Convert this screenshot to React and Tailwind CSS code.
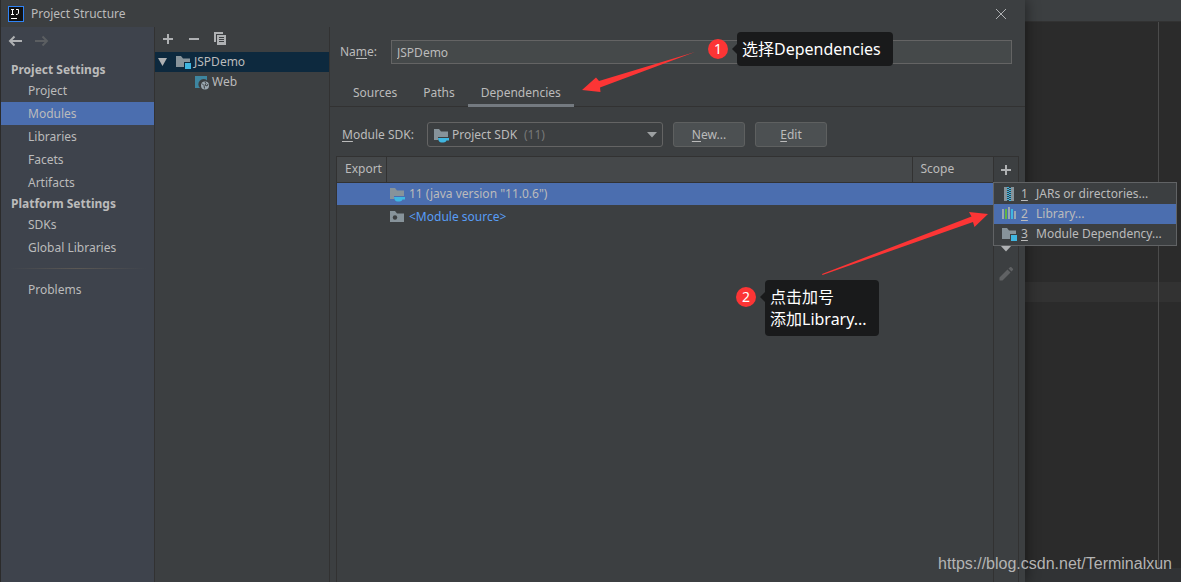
import React, { useState } from 'react';

const PROJECT_ITEMS = ['Project', 'Modules', 'Libraries', 'Facets', 'Artifacts'];
const PLATFORM_ITEMS = ['SDKs', 'Global Libraries'];
const TABS = ['Sources', 'Paths', 'Dependencies'];

function FolderShape() {
  return <path d="M1 2h5l2 2.5h7V13H1z" fill="#87939a" />;
}

function ModuleIcon() {
  return (
    <svg width="16" height="16" viewBox="0 0 16 16" className="shrink-0">
      <path d="M1 2h5l2 2.5h7V8H9v5H1z" fill="#87939a" />
      <path d="M10 9h6v6h-6z" fill="#40b6e0" />
    </svg>
  );
}

function SdkIcon() {
  return (
    <svg width="16" height="16" viewBox="0 0 16 16" className="shrink-0">
      <path d="M1 2h5l2 2.5h7V10H5v3H1z" fill="#87939a" />
      <path d="M5 11h11v2.500h-2.500c-.5 1-1.500 2-3 2h-2C6.500 15.500 5 13.500 5 11z" fill="#40b6e0" />
    </svg>
  );
}

function SourceIcon() {
  return (
    <svg width="16" height="16" viewBox="0 0 16 16" className="shrink-0">
      <FolderShape />
      <circle cx="6" cy="8.500" r="2.200" fill="#3c3f41" />
    </svg>
  );
}

function WebIcon() {
  return (
    <svg width="16" height="16" viewBox="0 0 16 16" className="shrink-0">
      <path d="M1 2h12v4.500A5 5 0 0 0 6 14H1z" fill="#3e86a0" />
      <circle cx="11" cy="11.500" r="4" fill="#9aa7b0" />
      <path d="M8 9.500l2 2 .5 3M11 8l1 1.500-1 1.500 2 1 1-2" fill="none" stroke="#3c3f41" />
    </svg>
  );
}

function JarIcon() {
  return (
    <svg width="16" height="16" viewBox="0 0 16 16" className="shrink-0">
      <path d="M3 1h10v14H3z" fill="#87939a" />
      <path d="M6 1h4v14H6z" fill="#33434c" />
      <path d="M7 1v14" stroke="#40b6e0" strokeWidth="2" strokeDasharray="1 1" />
      <path d="M9 2v13" stroke="#40b6e0" strokeWidth="2" strokeDasharray="1 1" />
    </svg>
  );
}

function LibraryIcon() {
  return (
    <svg width="16" height="16" viewBox="0 0 16 16" className="shrink-0">
      <path d="M1 3h2v10H1zM7 1h2v12H7zM13 5h2v8h-2z" fill="#9aa7b0" />
      <path d="M4 3h2v10H4z" fill="#62b543" />
      <path d="M10 3h2v10h-2z" fill="#40b6e0" />
    </svg>
  );
}

function PlusIcon() {
  return (
    <svg width="16" height="16" viewBox="0 0 16 16">
      <path d="M8 3v10M3 8h10" stroke="#afb1b3" strokeWidth="2" />
    </svg>
  );
}

function MinusIcon() {
  return (
    <svg width="16" height="16" viewBox="0 0 16 16">
      <path d="M3 8h10" stroke="#afb1b3" strokeWidth="2" />
    </svg>
  );
}

function CopyIcon() {
  return (
    <svg width="16" height="16" viewBox="0 0 16 16">
      <path d="M3 11V2h8" fill="none" stroke="#afb1b3" strokeWidth="2" />
      <path d="M5 4h9v10H5z" fill="#afb1b3" />
      <path d="M7 6.500h5M7 8.500h5M7 10.500h5" stroke="#3c3f41" />
    </svg>
  );
}

function ArrowIcon({ color, flip }) {
  return (
    <svg width="16" height="16" viewBox="0 0 16 16" className={flip ? 'rotate-180' : ''}>
      <path d="M15 8H3M7.500 3.500L3 8l4.500 4.500" fill="none" stroke={color} strokeWidth="2" />
    </svg>
  );
}

function Titlebar() {
  return (
    <header className="flex h-[27px] items-center pr-4 pl-[7px]">
      <svg width="16" height="16" viewBox="0 0 16 16">
        <rect x="0.500" y="0.500" width="15" height="15" fill="#111" stroke="#2f83f5" />
        <path d="M3 12.500h6" stroke="#fff" />
        <path d="M3 3.500h3M4.500 3v5M3 8.500h3M8 3.500h2.500V7c0 1-1 1.500-2.500 1.500" fill="none" stroke="#fff" />
      </svg>
      <h1 className="ml-[7px] flex-1">Project Structure</h1>
      <button aria-label="Close" className="flex h-4 w-4 items-center justify-center">
        <svg width="10" height="10" viewBox="0 0 10 10">
          <path d="M0 0l10 10M10 0L0 10" stroke="#afb1b3" />
        </svg>
      </button>
    </header>
  );
}

function SidebarItem({ label, active, onSelect }) {
  return (
    <button
      onClick={() => onSelect(label)}
      className={`block h-[23px] w-full pl-[27px] text-left ${active ? 'bg-[#4b6eaf]' : ''}`}
    >
      {label}
    </button>
  );
}

function Sidebar() {
  const [selected, setSelected] = useState('Modules');

  return (
    <nav className="w-[154px] shrink-0 border-r border-[#323232] bg-[#3e434c]">
      <div className="flex h-[33px] items-center gap-[11px] pb-[5px] pl-1.5">
        <button aria-label="Back"><ArrowIcon color="#afb1b3" /></button>
        <button aria-label="Forward"><ArrowIcon color="#5b5e61" flip /></button>
      </div>
      <h2 className="h-[19px] pl-2.5 leading-[19px] font-bold">Project Settings</h2>
      {PROJECT_ITEMS.map((item) => (
        <SidebarItem key={item} label={item} active={item === selected} onSelect={setSelected} />
      ))}
      <h2 className="h-[19px] pl-2.5 leading-[19px] font-bold">Platform Settings</h2>
      {PLATFORM_ITEMS.map((item) => (
        <SidebarItem key={item} label={item} active={item === selected} onSelect={setSelected} />
      ))}
      <div className="mx-2 mt-[9px] mb-[9px] h-px bg-linear-to-r from-transparent via-[#5b5854] to-transparent" />
      <SidebarItem label="Problems" active={selected === 'Problems'} onSelect={setSelected} />
    </nav>
  );
}

function ModuleTree() {
  return (
    <aside className="w-[175px] shrink-0 border-r border-[#323232]">
      <div className="flex h-[25px] items-center gap-2.5 pb-0.5 pl-[5px]">
        <button aria-label="Add"><PlusIcon /></button>
        <button aria-label="Remove"><MinusIcon /></button>
        <button aria-label="Copy"><CopyIcon /></button>
      </div>
      <button className="flex h-5 w-full items-center bg-[#0d293e] pl-[3px]">
        <svg width="10" height="8" viewBox="0 0 10 8">
          <path d="M0 0h9L4.500 8z" fill="#afb1b3" />
        </svg>
        <span className="ml-[7px] flex items-center gap-[3px]"><ModuleIcon />JSPDemo</span>
      </button>
      <button className="flex h-5 w-full items-center gap-0.5 pl-[39px]">
        <WebIcon />Web
      </button>
    </aside>
  );
}

function SdkRow() {
  return (
    <div className="flex items-center pt-[15px] pb-[9px] pl-3">
      <label htmlFor="sdk" className="w-[85px]">
        <u className="underline-offset-2">M</u>odule SDK:
      </label>
      <div className="relative w-[236px]">
        <select
          id="sdk"
          className="h-[25px] w-full appearance-none rounded-[3px] border border-[#646464] bg-[#3c3f41] pl-6"
        >
          <option>Project SDK</option>
        </select>
        <span className="pointer-events-none absolute inset-0 flex items-center pr-1.5 pl-1.5">
          <SdkIcon />
          <span className="ml-[75px] flex-1 text-[#787878]">(11)</span>
          <svg width="10" height="6" viewBox="0 0 10 6">
            <path d="M0 0h10L5 5.500z" fill="#9da0a2" />
          </svg>
        </span>
      </div>
      <button className="ml-2.5 h-[25px] w-[72px] rounded-[3px] border border-[#5e6060] bg-[#4c5052]">
        <u className="underline-offset-2">N</u>ew...
      </button>
      <button className="ml-2.5 h-[25px] w-[72px] rounded-[3px] border border-[#5e6060] bg-[#4c5052]">
        <u className="underline-offset-2">E</u>dit
      </button>
    </div>
  );
}

function MenuRow({ icon, number, label, active }) {
  return (
    <button
      role="menuitem"
      className={`flex h-5 w-full items-center pl-[7px] whitespace-nowrap ${active ? 'bg-[#4b6eaf]' : ''}`}
    >
      {icon}
      <u className="ml-1 w-[15px] text-left underline-offset-2">{number}</u>
      {label}
    </button>
  );
}

function AddMenu() {
  return (
    <div role="menu" className="absolute top-[25px] -left-px z-10 w-[184px] border border-[#616365] bg-[#3c3f41] pt-px pb-px">
      <MenuRow icon={<JarIcon />} number="1" label="JARs or directories..." />
      <MenuRow icon={<LibraryIcon />} number="2" label="Library..." active />
      <MenuRow icon={<ModuleIcon />} number="3" label="Module Dependency..." />
    </div>
  );
}

function DependencyPanel() {
  return (
    <div className="mr-1.5 ml-1.5 flex flex-1 border-x border-t border-[#323232]">
      <div className="flex-1 border-r border-[#323232]">
        <table className="w-full table-fixed border-collapse text-left">
          <thead>
            <tr className="h-[25px] border-b border-[#323232] bg-[#45484a]">
              <th className="w-[49px] border-r border-[#323232] pr-0 pl-2 font-normal">Export</th>
              <th aria-label="Dependency" />
              <th className="w-[81px] border-l border-[#323232] pl-2 font-normal">Scope</th>
            </tr>
          </thead>
          <tbody>
            <tr className="h-[23px] bg-[#4b6eaf]">
              <td />
              <td className="pl-[3px]">
                <span className="flex items-center gap-1"><SdkIcon />11 (java version "11.0.6")</span>
              </td>
              <td />
            </tr>
            <tr className="h-[23px]">
              <td />
              <td className="pl-[3px] text-[#589df6]">
                <span className="flex items-center gap-1"><SourceIcon />&lt;Module source&gt;</span>
              </td>
              <td />
            </tr>
          </tbody>
        </table>
      </div>
      <div className="relative flex w-6 flex-col items-center">
        <button aria-label="Add" className="flex h-[26px] items-center"><PlusIcon /></button>
        <button aria-label="Remove" className="flex h-[26px] items-center"><MinusIcon /></button>
        <button aria-label="Move up" className="flex h-[26px] items-center">
          <svg width="10" height="6" viewBox="0 0 10 6"><path d="M0 6h10L5 0z" fill="#afb1b3" /></svg>
        </button>
        <button aria-label="Move down" className="flex h-[26px] items-center">
          <svg width="12" height="8" viewBox="0 0 12 8"><path d="M0 1h12L6 7.500z" fill="#afb1b3" /></svg>
        </button>
        <button aria-label="Edit" className="flex h-[26px] items-center">
          <svg width="16" height="16" viewBox="0 0 16 16">
            <path d="M1.500 11.500L9.500 3.500l3 3-8 8h-3zM10.500 2.500L12 1.200c.5-.4 1-.4 1.400 0l1.500 1.500c.4.4.4 1 0 1.400L13.500 5.500z" fill="#606264" />
          </svg>
        </button>
        <AddMenu />
      </div>
    </div>
  );
}

function Details() {
  const [tab, setTab] = useState('Dependencies');

  return (
    <main className="flex flex-1 flex-col">
      <div className="flex items-center pt-[13px] pr-[13px] pl-2.5">
        <label htmlFor="name" className="w-[51px]">
          Na<u className="underline-offset-2">m</u>e:
        </label>
        <input
          id="name"
          defaultValue="JSPDemo"
          className="h-6 min-w-0 flex-1 border border-[#646464] bg-[#45494a] px-[5px] outline-none"
        />
      </div>
      <div role="tablist" className="mt-4 flex h-[27px] border-b border-[#323232] pl-2.5">
        {TABS.map((name) => (
          <button
            key={name}
            role="tab"
            aria-selected={name === tab}
            onClick={() => setTab(name)}
            className={`h-[27px] border-b-3 px-[13px] pt-0.5 ${name === tab ? 'border-[#747a80]' : 'border-transparent'}`}
          >
            {name}
          </button>
        ))}
      </div>
      <SdkRow />
      <DependencyPanel />
    </main>
  );
}

function Editor() {
  return (
    <div className="flex w-[156px] shrink-0 flex-col bg-[#2b2b2b]">
      <div className="h-[22px] border-b border-[#323232] bg-[#3c3f41]" />
      <div className="flex flex-1">
        <div className="w-[134px] border-r border-[#4b4b4b]">
          <div className="mt-[260px] h-5 bg-[#323232]" />
        </div>
        <div className="flex-1">
          <div className="mt-[260px] h-5 bg-[#323232]" />
        </div>
      </div>
      <div className="h-[14px] bg-[#313335]" />
    </div>
  );
}

function Callout({ number, className, children }) {
  return (
    <div className={`absolute z-20 flex text-base leading-[22px] text-white ${className}`}>
      <span className="mt-[7px] flex h-5 w-5 items-center justify-center rounded-full bg-[#fc3535] text-sm">
        {number}
      </span>
      <svg width="5" height="10" viewBox="0 0 5 10" className="mt-3 ml-1">
        <path d="M5 0v10L0 5z" fill="#191a1b" />
      </svg>
      <p className="rounded bg-[#191a1b] py-1.5 pr-3 pl-[5px] whitespace-nowrap">{children}</p>
    </div>
  );
}

export default function App() {
  return (
    <div className="relative flex min-h-screen overflow-hidden border-l border-[#2b2b2b] bg-[#3c3f41] font-['Noto_Sans','Noto_Sans_CJK_SC',sans-serif] text-xs leading-5 text-[#bbbbbb]">
      <div className="relative z-10 flex flex-1 flex-col bg-[#3c3f41] shadow-[2px_0_12px_rgba(0,0,0,0.4)]">
        <Titlebar />
        <div className="flex flex-1">
          <Sidebar />
          <ModuleTree />
          <Details />
        </div>
      </div>
      <Editor />

      <svg width="114" height="42" viewBox="0 0 114 42" className="pointer-events-none absolute top-[51px] left-[581px] z-20">
        <path d="M0 39L14 26.500 17 30 113 1 18 36.500 18.500 41z" fill="#fc3535" />
      </svg>
      <svg width="168" height="66" viewBox="0 0 168 66" className="pointer-events-none absolute top-[210px] left-[820px] z-20">
        <path d="M167 4L148 2 150.500 6.500 1 64 1.500 65 152 12 153.500 17z" fill="#fc3535" />
      </svg>
      <Callout number="1" className="top-8 left-[707px]">选择Dependencies</Callout>
      <Callout number="2" className="top-[280px] left-[735px]">点击加号<br />添加Library...</Callout>

      <a
        href="https://blog.csdn.net/Terminalxun"
        className="absolute right-[9px] bottom-[7px] z-20 font-['Liberation_Sans',sans-serif] text-base leading-[22px] text-[#b4b4b4]"
      >
        https://blog.csdn.net/Terminalxun
      </a>
    </div>
  );
}
